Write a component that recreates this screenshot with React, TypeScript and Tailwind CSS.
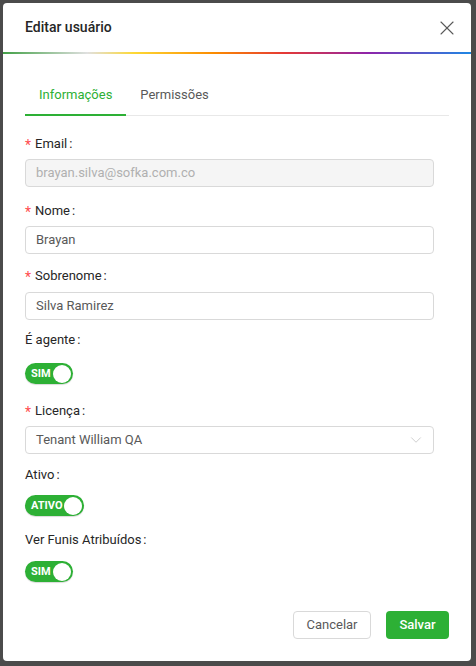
import { ChevronDown, X } from 'lucide-react'

function Label({ text, required }: { text: string; required?: boolean }) {
  return (
    <div className="h-[22px] flex items-center text-[13px] text-[#262626] leading-[22px]">
      {required && <span className="text-[#ff4d4f] mr-[4px] text-[14px] leading-none pt-[2px]">*</span>}
      <span>{text}</span>
      <span className="ml-[2px] mr-[8px]">:</span>
    </div>
  )
}

function Toggle({ text }: { text: string }) {
  return (
    <div className="inline-flex items-center h-[21px] rounded-full bg-[#2db035] pl-[6px] pr-[2px] gap-[2px] shadow-[0_1px_1px_rgba(0,0,0,0.15)]">
      <span className="text-white text-[11px] font-bold leading-none">{text}</span>
      <span className="w-[18px] h-[18px] rounded-full bg-white" />
    </div>
  )
}

export default function App() {
  return (
    <div
      className="w-[476px] h-[666px] bg-[#4b4b4b] pt-[3px] pl-[3px] overflow-hidden"
      style={{ fontFamily: 'Roboto, "Liberation Sans", sans-serif' }}
    >
      <div className="w-[468px] h-[658px] bg-white rounded-[4px] flex flex-col">
        {/* Header */}
        <div className="h-[49px] flex items-center justify-between pl-[22px] pr-[12px]">
          <h1 className="text-[14px] font-medium text-[#262626]">Editar usuário</h1>
          <X size={24} strokeWidth={1.1} className="text-[#595959]" />
        </div>
        <div
          className="h-[2px]"
          style={{ background: 'linear-gradient(to right, #43a047 0%, #e0e0e0 18%, #fdd835 28%, #fb8c00 45%, #e53935 60%, #8e24aa 78%, #1e88e5 100%)' }}
        />

        {/* Body */}
        <div className="flex-1 px-[22px] pt-[25px]">
          <div className="flex border-b border-[#e8e8e8] h-[37px] text-[13px]">
            <div className="px-[14px] text-[#2db035] border-b-2 border-[#2db035] -mb-[1px] pt-[6px]">Informações</div>
            <div className="px-[14px] text-[#595959] pt-[6px]">Permissões</div>
          </div>

          <div className="pr-[15px] pt-[17px]">
            <Label text="Email" required />
            <div className="mt-[4px] h-[28px] rounded-[4px] border border-[#d9d9d9] bg-[#f5f5f5] px-[10px] flex items-center text-[13px] text-[#b0b0b0]">
              brayan.silva@sofka.com.co
            </div>

            <div className="mt-[13px]">
              <Label text="Nome" required />
            </div>
            <div className="mt-[4px] h-[28px] rounded-[4px] border border-[#d9d9d9] px-[10px] flex items-center text-[13px] text-[#595959]">
              Brayan
            </div>

            <div className="mt-[11px]">
              <Label text="Sobrenome" required />
            </div>
            <div className="mt-[5px] h-[28px] rounded-[4px] border border-[#d9d9d9] px-[10px] flex items-center text-[13px] text-[#595959]">
              Silva Ramirez
            </div>

            <div className="mt-[9px]">
              <Label text="É agente" />
            </div>
            <div className="mt-[9px]">
              <Toggle text="SIM" />
            </div>

            <div className="mt-[16px]">
              <Label text="Licença" required />
            </div>
            <div className="mt-[4px] h-[28px] rounded-[4px] border border-[#d9d9d9] pl-[10px] pr-[8px] flex items-center justify-between text-[13px] text-[#595959]">
              <span>Tenant William QA</span>
              <ChevronDown size={18} strokeWidth={1} className="text-[#bfbfbf]" />
            </div>

            <div className="mt-[10px]">
              <Label text="Ativo" />
            </div>
            <div className="mt-[6px]">
              <Toggle text="ATIVO" />
            </div>

            <div className="mt-[13px]">
              <Label text="Ver Funis Atribuídos" />
            </div>
            <div className="mt-[7px]">
              <Toggle text="SIM" />
            </div>
          </div>
        </div>

        {/* Footer */}
        <div className="flex justify-end gap-[15px] px-[22px] pb-[22px]">
          <button className="h-[28px] w-[78px] rounded-[4px] border border-[#d9d9d9] bg-white text-[13px] text-[#595959]">
            Cancelar
          </button>
          <button className="h-[28px] w-[63px] rounded-[4px] bg-[#2db035] text-[13px] font-medium text-white">
            Salvar
          </button>
        </div>
      </div>
    </div>
  )
}
